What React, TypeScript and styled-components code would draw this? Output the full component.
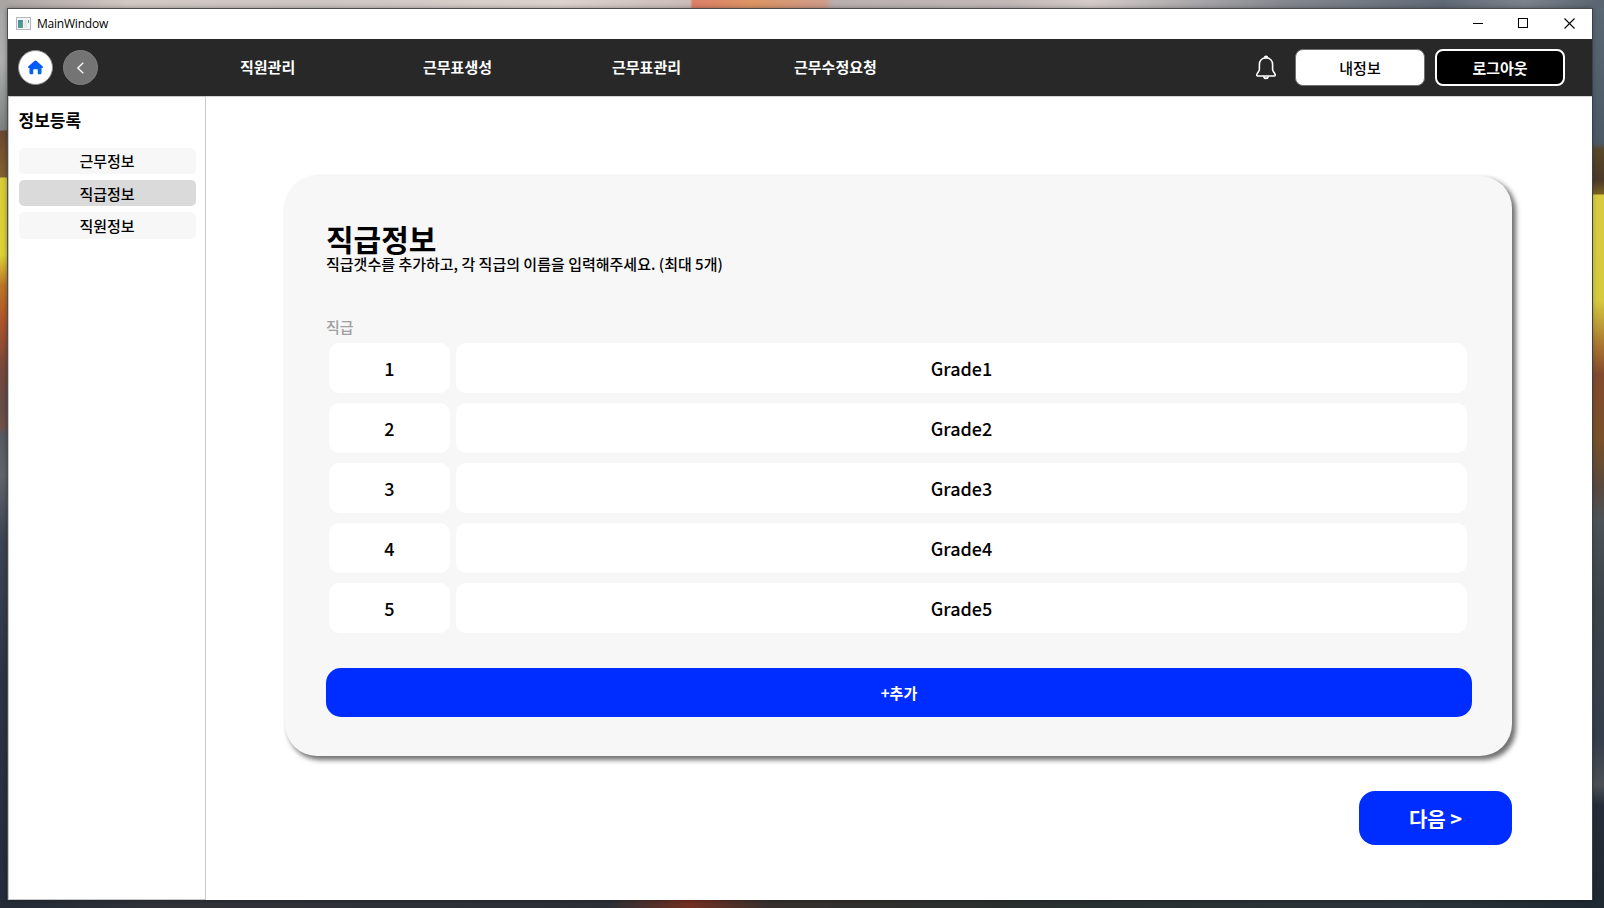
import React from "react";
import styled, { createGlobalStyle } from "styled-components";

const GlobalStyle = createGlobalStyle`
  *, *::before, *::after { box-sizing: border-box; }
  html, body { margin: 0; padding: 0; overflow: hidden; }
  body { font-family: "Noto Sans CJK KR", "Noto Sans", sans-serif; color: #000; }
  button { font: inherit; color: inherit; padding: 0; border: 0; background: none; }
  h1, h2, p { margin: 0; }
`;

const Desktop = styled.div`
  display: flex;
  width: 1604px;
  height: 908px;
  padding: 8px 12px 8px 7px;
  background:
    linear-gradient(90deg, #a9a3a1 0, #d2c8c4 8%, #cdc6c3 20%, #ddd2cd 35%, #cbbdb9 43%, #dc8068 43.2%, #dc9565 47%, #cf9b8b 51.4%, #b9b0af 52%, #c3bab8 63%, #d5ccc9 68%, #85888f 80%, #606a76 90%, #7b828b 95%, #586470 100%) 0 0 / 100% 8px no-repeat,
    linear-gradient(90deg, #242c38 0, #303238 10%, #2c3036 38%, #733022 43%, #35302e 48%, #29302f 65%, #2c343b 88%, #1e2931 100%) 0 100% / 100% 8px no-repeat,
    linear-gradient(180deg, #a5a5a5 0, #b0b0b1 60px, #7d817f 130px, #6b4a31 131px, #82612f 177px, #d8cd3b 178px, #ded238 255px, #bd7926 285px, #b1552a 320px, #7a4939 365px, #664b48 405px, #705049 425px, #575b61 435px, #60656c 475px, #3c4552 540px, #2d3544 680px, #252d3a 908px) 0 0 / 7px 100% no-repeat,
    linear-gradient(180deg, #5a6774 0, #4b5967 143px, #594729 150px, #4c3928 180px, #796024 194px, #d9cb3f 195px, #d6ca3f 300px, #aa7631 345px, #824a2e 375px, #795029 440px, #59493d 485px, #4c5358 520px, #3b444a 600px, #343e4c 740px, #4b5056 785px, #242d39 805px, #1e2831 908px) 100% 0 / 12px 100% no-repeat;
`;

const Window = styled.main`
  flex: 1;
  display: flex;
  flex-direction: column;
  border: solid #4c4d4f;
  border-width: 1px 0 0 1px;
  box-shadow: 1px 0 #3b4147, 0 0 5px rgba(0, 0, 0, 0.35);
  background: #fff;
`;

const TitleBar = styled.header`
  display: flex;
  align-items: center;
  height: 30px;
  padding: 0 0 2px 8px;
  flex: none;
`;

const TitleText = styled.span`
  flex: 1;
  margin-left: 6px;
  font: 12px/16px "Open Sans", "Noto Sans", sans-serif;
  letter-spacing: -0.22px;
  padding-top: 1px;
`;

const WindowButton = styled.button`
  display: grid;
  place-items: center;
  width: 45.5px;
  height: 28px;
`;

const NavBar = styled.nav`
  display: flex;
  align-items: center;
  height: 57px;
  flex: none;
  padding: 0 27px 0 10px;
  background: #282828;
  color: #fff;
`;

const RoundButton = styled.button<{ $fill: string; $edge: string }>`
  display: grid;
  place-items: center;
  width: 35px;
  height: 35px;
  margin-right: 10px;
  border: 1px solid ${(p) => p.$edge};
  border-radius: 50%;
  background: ${(p) => p.$fill};
`;

const Menu = styled.div`
  display: flex;
  flex: 1;
  margin-left: 132px;
  padding-bottom: 2px;
  font-size: 15px;
  font-weight: 700;
  line-height: 22px;
`;

const MenuItem = styled.a<{ $width: number }>`
  width: ${(p) => p.$width}px;
`;

const BellButton = styled.button`
  display: grid;
  width: 22px;
  height: 25px;
  margin-right: 18px;
`;

const AccountButton = styled.button<{ $dark?: boolean }>`
  width: 130px;
  height: 37px;
  margin-left: ${(p) => (p.$dark ? 10 : 0)}px;
  border: ${(p) => (p.$dark ? "2px solid #fff" : "1px solid #707070")};
  border-radius: 8px;
  background: ${(p) => (p.$dark ? "#000" : "#fff")};
  color: ${(p) => (p.$dark ? "#fff" : "#000")};
  font-size: 15px;
  font-weight: ${(p) => (p.$dark ? 700 : 500)};
  line-height: 22px;
`;

const Body = styled.div`
  display: flex;
  flex: 1;
  min-height: 0;
`;

const Sidebar = styled.aside`
  width: 198px;
  padding: 11px 9px 0 10px;
  border: 1px solid #c8c8c8;
`;

const SidebarTitle = styled.h2`
  height: 40px;
  margin-left: -0.5px;
  font-size: 17px;
  font-weight: 700;
  line-height: 24px;
`;

const SidebarList = styled.div`
  display: flex;
  flex-direction: column;
  gap: 6px;
`;

const SidebarItem = styled.button<{ $active?: boolean }>`
  height: 26px;
  padding-right: 1px;
  border-radius: 5px;
  background: ${(p) => (p.$active ? "#dadada" : "#f7f7f7")};
  font-size: 15px;
  font-weight: 500;
  line-height: ${(p) => (p.$active ? 28 : 26)}px;

  &:last-child {
    height: 27px;
    line-height: 28px;
  }
`;

const Content = styled.section`
  display: flex;
  flex: 1;
  flex-direction: column;
  align-items: flex-end;
  padding: 79px 80px 0 79px;
  border-top: 1px solid #d4d4d4;
`;

const Card = styled.div`
  display: flex;
  flex-direction: column;
  width: 1227px;
  height: 580px;
  padding: 46px 40px 0 41px;
  border-radius: 32px;
  background: #f7f7f7;
  box-shadow: 3.5px 3.5px 5px rgba(0, 0, 0, 0.56);
`;

const CardTitle = styled.h1`
  height: 33px;
  font-size: 30px;
  font-weight: 700;
  line-height: 33px;
`;

const Description = styled.p`
  height: 63px;
  font-size: 15px;
  font-weight: 500;
  line-height: 18px;
`;

const ColumnLabel = styled.p`
  height: 25px;
  color: #a0a0a0;
  font-size: 15px;
  font-weight: 500;
  line-height: 18px;
`;

const Rows = styled.div`
  display: flex;
  flex-direction: column;
  gap: 10px;
  padding: 0 5px 0 3px;
`;

const Row = styled.div`
  display: grid;
  grid-template-columns: 121px 1fr;
  gap: 6px;
`;

const Cell = styled.div`
  height: 50px;
  border-radius: 10px;
  background: #fff;
  font-size: 18px;
  font-weight: 500;
  line-height: 50px;
  text-align: center;
`;

const AddButton = styled.button`
  height: 49px;
  margin-top: 34.5px;
  border-radius: 15px;
  background: #002dff;
  color: #fff;
  font-size: 15px;
  font-weight: 700;
  line-height: 49px;
`;

const NextButton = styled.button`
  width: 153px;
  height: 54px;
  margin-top: 35px;
  border-radius: 16px;
  background: #002dff;
  color: #fff;
  font-size: 20px;
  font-weight: 700;
  line-height: 56px;
`;

const AppIcon = () => (
  <svg width="15" height="13" viewBox="0 0 15 13">
    <defs>
      <linearGradient id="pane" x1="0" y1="0" x2="1" y2="1">
        <stop offset="0" stopColor="#4a82b4" />
        <stop offset="1" stopColor="#5da878" />
      </linearGradient>
    </defs>
    <rect x=".5" y=".5" width="14" height="12" fill="#f2f4f5" stroke="#b4b8bd" />
    <rect x="2" y="3" width="5" height="8" fill="url(#pane)" />
    <path d="M8 3h3v8H8z" fill="#e6e9ea" />
    <path d="M12 3h1v3h-1z" fill="#67a493" />
  </svg>
);

const HomeIcon = () => (
  <svg width="17" height="15" viewBox="0 0 17 15">
    <defs>
      <linearGradient id="roof" x1="0" y1="0" x2="1" y2="1">
        <stop offset=".35" stopColor="#0057ff" />
        <stop offset="1" stopColor="#0078c8" />
      </linearGradient>
    </defs>
    <path
      transform="translate(.5 0)"
      d="M6.9.9Q8 0 9.1.9L15.3 6.6Q16 7.6 15 8H14V13Q14 14.3 12.8 14.3H10.3V10Q10.3 9.3 9.6 9.3H6.4Q5.7 9.3 5.7 10V14.3H3.2Q2 14.3 2 13V8H1Q0 7.6.7 6.6Z"
      fill="url(#roof)"
    />
  </svg>
);

const BackIcon = () => (
  <svg width="9" height="12" viewBox="0 0 9 12" fill="none" stroke="#fff" strokeWidth="1.3">
    <path d="M7.3.7 1.8 6l5.5 5.3" />
  </svg>
);

const BellIcon = () => (
  <svg width="22" height="25" viewBox="0 0 22 25" fill="none" stroke="#fff" strokeWidth="1.6" strokeLinejoin="round">
    <path d="M11 2.9C7 2.9 4.4 5.8 4.4 9.5V14.5C4.4 16.8 1.7 18.1 1.7 20Q1.7 21 2.7 21H19.3Q20.3 21 20.3 20C20.3 18.1 17.6 16.8 17.6 14.5V9.5C17.6 5.8 15 2.9 11 2.9Z" />
    <path d="M9.7 2.8Q9.6 1.2 11 1.2T12.3 2.8M8.5 21.3Q9 23.4 11 23.4T13.5 21.3" />
  </svg>
);

const menu = [
  { label: "직원관리", width: 183 },
  { label: "근무표생성", width: 189 },
  { label: "근무표관리", width: 182 },
  { label: "근무수정요청", width: 100 },
];

const grades = ["Grade1", "Grade2", "Grade3", "Grade4", "Grade5"];

export default function App() {
  return (
    <>
      <GlobalStyle />
      <Desktop>
        <Window>
          <TitleBar>
            <AppIcon />
            <TitleText>MainWindow</TitleText>
            <WindowButton aria-label="Minimize">
              <svg width="10" height="10"><path d="M0 5.5h10" stroke="#000" /></svg>
            </WindowButton>
            <WindowButton aria-label="Maximize">
              <svg width="11" height="10"><rect x=".5" y=".5" width="9" height="9" fill="none" stroke="#000" /></svg>
            </WindowButton>
            <WindowButton aria-label="Close">
              <svg width="11" height="11"><path d="m.5.5 10 10m0-10-10 10" stroke="#000" strokeWidth="1.1" /></svg>
            </WindowButton>
          </TitleBar>
          <NavBar>
            <RoundButton $fill="#fff" $edge="#8a8a8a" aria-label="Home"><HomeIcon /></RoundButton>
            <RoundButton $fill="#747474" $edge="#808080" aria-label="Back"><BackIcon /></RoundButton>
            <Menu>
              {menu.map((m) => (
                <MenuItem key={m.label} $width={m.width}>{m.label}</MenuItem>
              ))}
            </Menu>
            <BellButton aria-label="Notifications"><BellIcon /></BellButton>
            <AccountButton>내정보</AccountButton>
            <AccountButton $dark>로그아웃</AccountButton>
          </NavBar>
          <Body>
            <Sidebar>
              <SidebarTitle>정보등록</SidebarTitle>
              <SidebarList>
                <SidebarItem>근무정보</SidebarItem>
                <SidebarItem $active>직급정보</SidebarItem>
                <SidebarItem>직원정보</SidebarItem>
              </SidebarList>
            </Sidebar>
            <Content>
              <Card>
                <CardTitle>직급정보</CardTitle>
                <Description>직급갯수를 추가하고, 각 직급의 이름을 입력해주세요. (최대 5개)</Description>
                <ColumnLabel>직급</ColumnLabel>
                <Rows>
                  {grades.map((g, i) => (
                    <Row key={g}>
                      <Cell>{i + 1}</Cell>
                      <Cell>{g}</Cell>
                    </Row>
                  ))}
                </Rows>
                <AddButton>+추가</AddButton>
              </Card>
              <NextButton>다음 &gt;</NextButton>
            </Content>
          </Body>
        </Window>
      </Desktop>
    </>
  );
}
